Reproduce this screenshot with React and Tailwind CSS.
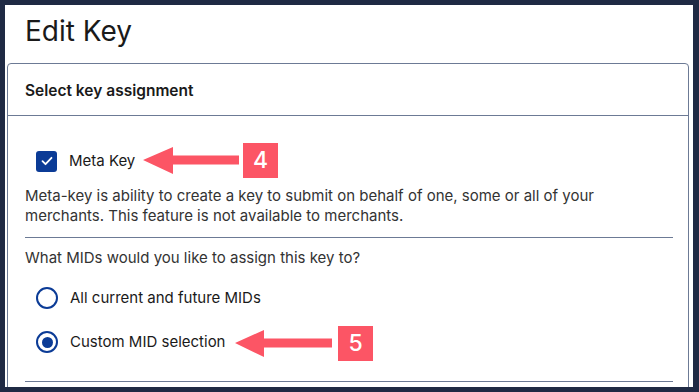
import React from "react";

const font = { fontFamily: "Inter, 'Noto Sans', sans-serif" };

const Callout = ({ tipX, y, headEnd, shaftEnd, badgeX, label }) => {
  // arrow pointing left with a numbered badge on its right
  const w = shaftEnd - tipX;
  return (
    <>
      <svg
        className="absolute"
        style={{ left: tipX, top: y - 16 }}
        width={w}
        height={32}
        viewBox={`0 0 ${w} 32`}
      >
        <polygon
          fill="#fc5565"
          points={`0,16 ${headEnd - tipX},3 ${headEnd - tipX},11.5 ${w},11.5 ${w},20.5 ${headEnd - tipX},20.5 ${headEnd - tipX},30`}
        />
      </svg>
      <div
        className="absolute w-[35px] h-[35px] bg-[#fc5565] text-white text-[23px] font-medium flex items-center justify-center"
        style={{ left: badgeX, top: y - 17 }}
      >
        {label}
      </div>
    </>
  );
};

const App = () => {
  return (
    <div
      className="relative w-[699px] h-[392px] bg-[#1f2a44] pt-[5px] pl-[5px] pr-[6px] overflow-hidden"
      style={font}
    >
      <div className="bg-white h-[382px] overflow-hidden">
        <h1 className="pl-[20px] pt-[9px] text-[28px] leading-[34px] text-[#1a1a1a] font-normal">
          Edit Key
        </h1>

        <div className="ml-[2px] mt-[15px] w-[682px] border border-[#6c7a95] rounded-t-[4px] h-[400px]">
          <div className="h-[52px] pl-[17px] pt-[2px] flex items-center border-b border-[#6c7a95]">
            <h3 className="text-[15.5px] font-semibold text-[#1a1a1a]">
              Select key assignment
            </h3>
          </div>

          <div className="pl-[17px] pr-[15px] pt-[34px]">
            <label className="flex items-center gap-[12px] pl-[11px]">
              <span className="w-[21px] h-[21px] rounded-[3px] bg-[#0b3b96] flex items-center justify-center">
                <svg width="14" height="14" viewBox="0 0 14 14" fill="none">
                  <path d="M2.5 7.2l3 3 6-6.4" stroke="white" strokeWidth="1.8" strokeLinecap="round" strokeLinejoin="round" />
                </svg>
              </span>
              <span className="text-[15px] text-[#1a1a1a]">Meta Key</span>
            </label>

            <p className="mt-[13px] max-w-[600px] text-[15px] leading-[20px] text-[#333]">
              Meta-key is ability to create a key to submit on behalf of one, some or all of your merchants. This feature is not available to merchants.
            </p>

            <div className="mt-[11px] border-t border-[#6c7a95]" />

            <p className="mt-[10px] text-[15px] leading-[20px] text-[#333]">
              What MIDs would you like to assign this key to?
            </p>

            <div className="mt-[19px] flex flex-col gap-[22px] pl-[11px]">
              <label className="flex items-center gap-[12px]">
                <span className="w-[22px] h-[22px] rounded-full border-[2.5px] border-[#0b3b96]" />
                <span className="text-[15px] text-[#1a1a1a]">All current and future MIDs</span>
              </label>
              <label className="flex items-center gap-[12px]">
                <span className="w-[22px] h-[22px] rounded-full border-[2.5px] border-[#0b3b96] flex items-center justify-center">
                  <span className="w-[11px] h-[11px] rounded-full bg-[#0b3b96]" />
                </span>
                <span className="text-[15px] text-[#1a1a1a]">Custom MID selection</span>
              </label>
            </div>

            <div className="mt-[27px] border-t border-[#6c7a95]" />
          </div>
        </div>
      </div>

      <Callout tipX={143} y={160} headEnd={173} shaftEnd={239} badgeX={243} label="4" />
      <Callout tipX={235} y={343} headEnd={264} shaftEnd={332} badgeX={338} label="5" />
    </div>
  );
};

export default App;
